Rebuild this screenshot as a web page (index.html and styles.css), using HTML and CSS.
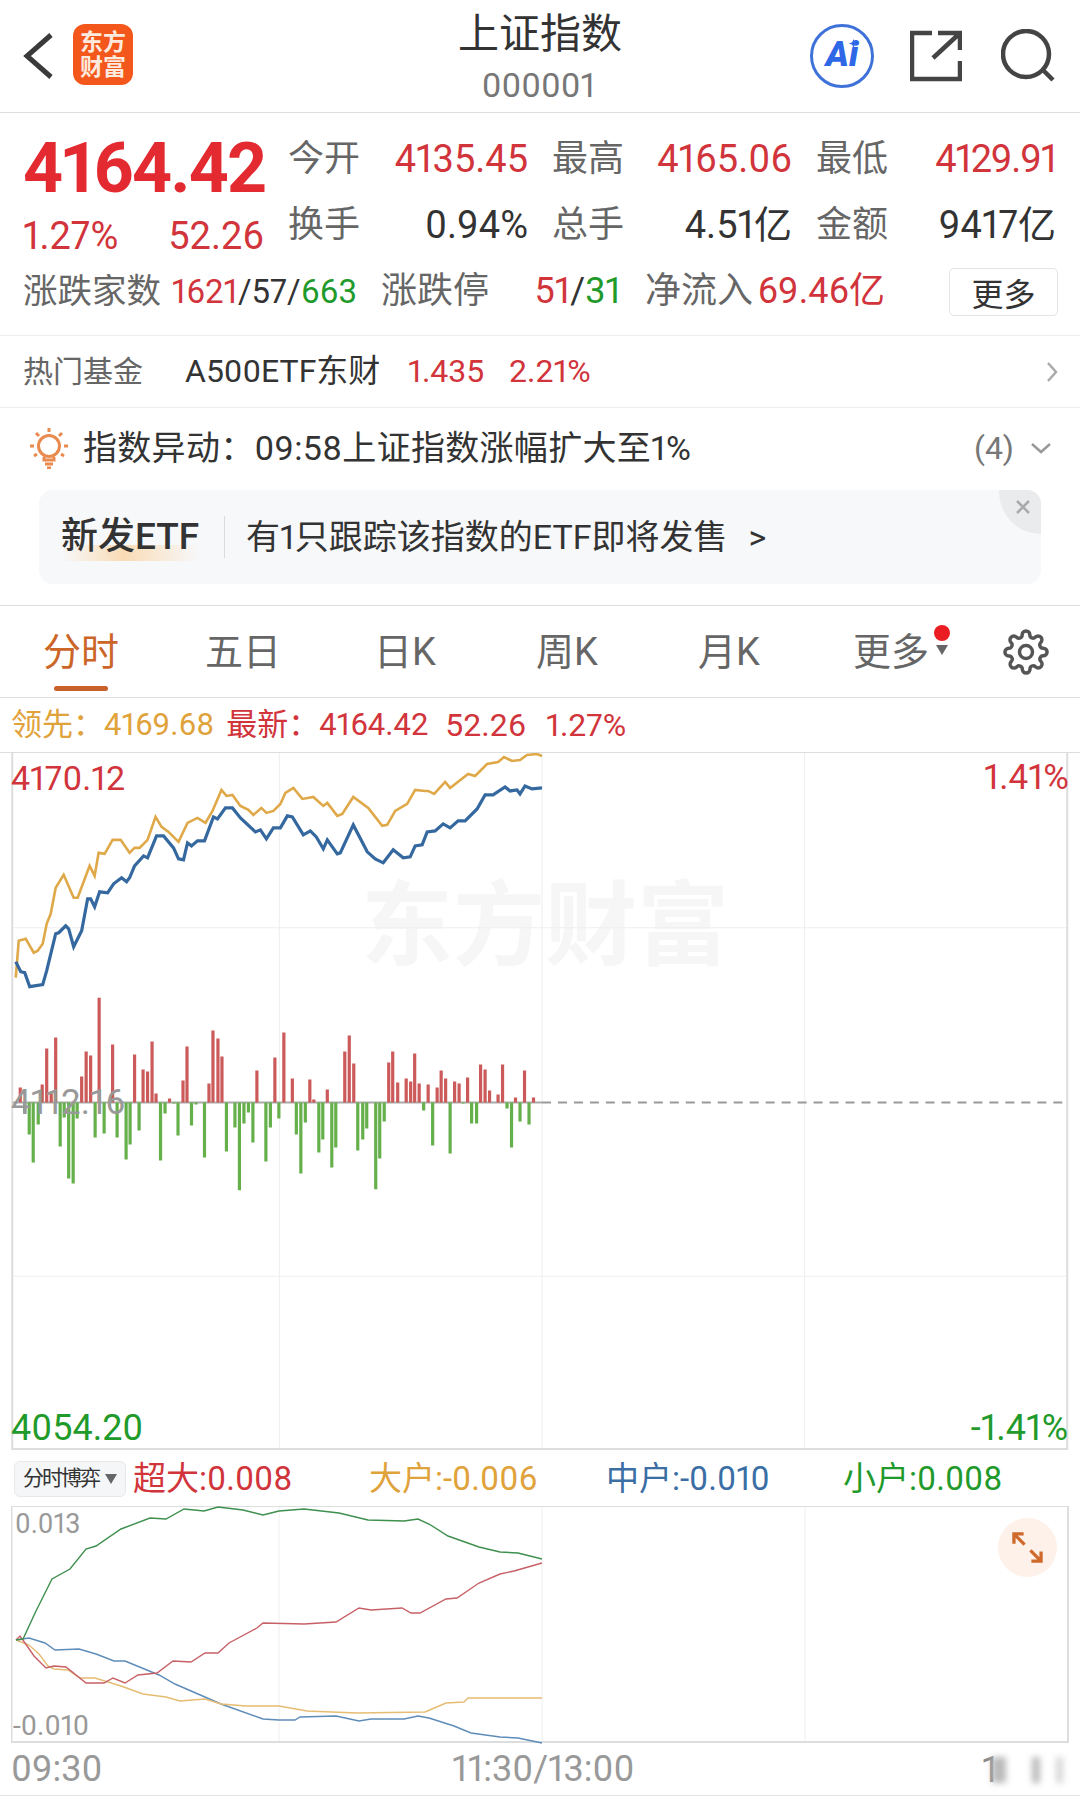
FILE: index.html
```html
<!DOCTYPE html>
<html lang="zh-CN">
<head>
  <meta charset="UTF-8">
  <meta name="viewport" content="width=device-width, initial-scale=1.0">
  <title>上证指数</title>
  <link rel="stylesheet" href="styles.css">
</head>
<body>
  <header class="top-bar">
    <svg class="back-icon" viewBox="0 0 32 48"><polyline points="28,3 4,24 28,45"/></svg>
    <div class="logo">东方<br>财富</div>
    <div class="title-box">
      <h1>上证指数</h1>
      <p>000001</p>
    </div>
    <div class="top-actions">
      <div class="ai-badge">
        <span>Ai</span>
        <svg class="ai-spark" viewBox="0 0 10 10"><path d="M5 0 6.4 3.6 10 5 6.4 6.4 5 10 3.6 6.4 0 5 3.6 3.6z"/></svg>
      </div>
      <svg class="share-icon" viewBox="0 0 52 52"><path d="M22 3H2V49H50V31M28 3H50V20M23 28 49 4"/></svg>
      <svg class="search-icon" viewBox="0 0 54 54"><circle cx="25" cy="25" r="23"/><path d="M42 41 52 51"/></svg>
    </div>
  </header>

  <!-- Quote block -->
  <section class="quote">
    <div class="quote-top">
      <div class="price-box">
        <div class="price">4164.42</div>
        <div class="price-sub"><span>1.27%</span><span>52.26</span></div>
      </div>
      <div class="stats">
        <div class="stat"><label>今开</label><span class="up">4135.45</span></div>
        <div class="stat"><label>最高</label><span class="up">4165.06</span></div>
        <div class="stat"><label>最低</label><span class="up tight">4129.91</span></div>
        <div class="stat"><label>换手</label><span>0.94%</span></div>
        <div class="stat"><label>总手</label><span>4.51亿</span></div>
        <div class="stat"><label>金额</label><span>9417亿</span></div>
      </div>
    </div>
    <div class="quote-bottom">
      <div class="stat stat-wide"><label>涨跌家数</label><span><b class="up">1621</b>/57/<b class="down">663</b></span></div>
      <div class="stat"><label>涨跌停</label><span><b class="up">51</b>/<b class="down">31</b></span></div>
      <div class="stat"><label>净流入</label><span class="up">69.46亿</span></div>
      <button class="more-btn">更多</button>
    </div>
  </section>

  <section class="fund-row">
    <span class="fund-label">热门基金</span>
    <span class="fund-name">A500ETF东财</span>
    <span class="up fund-price">1.435</span>
    <span class="up fund-pct">2.21%</span>
    <svg class="fund-arrow" viewBox="0 0 12 22"><polyline points="2,2 10,11 2,20"/></svg>
  </section>

  <section class="alert">
    <div class="alert-row">
      <svg class="bulb-icon" viewBox="0 0 40 42">
        <circle cx="20" cy="19" r="10.5"/>
        <path d="M20 1V5M7 6 10 9M33 6 30 9M1 19H5M35 19H39M5 29 8 27M35 29 32 27" class="bulb-rays"/>
        <path d="M15 30V33H25V30M16 37H24M18 41H22"/>
      </svg>
      <span class="alert-text">指数异动：09:58上证指数涨幅扩大至1%</span>
      <span class="alert-count">(4)</span>
      <svg class="alert-arrow" viewBox="0 0 22 12"><polyline points="2,2 11,10 20,2"/></svg>
    </div>
    <div class="etf-banner">
      <span class="etf-tag"><span>新发ETF</span></span>
      <i class="etf-divider"></i>
      <span class="etf-text">有1只跟踪该指数的ETF即将发售</span>
      <span class="etf-go">&gt;</span>
      <div class="etf-close">
        <svg viewBox="0 0 14 14"><path d="M1 1 13 13M13 1 1 13"/></svg>
      </div>
    </div>
  </section>

  <nav class="tabs">
    <div class="tab active">分时</div>
    <div class="tab">五日</div>
    <div class="tab">日K</div>
    <div class="tab">周K</div>
    <div class="tab">月K</div>
    <div class="tab tab-more">更多<i class="red-dot"></i><i class="tri"></i></div>
    <svg class="gear-icon" viewBox="0 0 24 24">
      <circle cx="12" cy="12" r="3.4"/>
      <path d="M19.4 15a1.65 1.65 0 0 0 .33 1.82l.06.06a2 2 0 0 1 0 2.83 2 2 0 0 1-2.83 0l-.06-.06a1.65 1.65 0 0 0-1.82-.33 1.65 1.65 0 0 0-1 1.51V21a2 2 0 0 1-2 2 2 2 0 0 1-2-2v-.09A1.65 1.65 0 0 0 9 19.4a1.65 1.65 0 0 0-1.82.33l-.06.06a2 2 0 0 1-2.83 0 2 2 0 0 1 0-2.83l.06-.06a1.65 1.65 0 0 0 .33-1.82 1.65 1.65 0 0 0-1.51-1H3a2 2 0 0 1-2-2 2 2 0 0 1 2-2h.09A1.65 1.65 0 0 0 4.6 9a1.65 1.65 0 0 0-.33-1.82l-.06-.06a2 2 0 0 1 0-2.83 2 2 0 0 1 2.83 0l.06.06a1.65 1.65 0 0 0 1.82.33H9a1.65 1.65 0 0 0 1-1.51V3a2 2 0 0 1 2-2 2 2 0 0 1 2 2v.09a1.65 1.65 0 0 0 1 1.51 1.65 1.65 0 0 0 1.82-.33l.06-.06a2 2 0 0 1 2.83 0 2 2 0 0 1 0 2.83l-.06.06a1.65 1.65 0 0 0-.33 1.82V9a1.65 1.65 0 0 0 1.51 1H21a2 2 0 0 1 2 2 2 2 0 0 1-2 2h-.09a1.65 1.65 0 0 0-1.51 1z"/>
    </svg>
  </nav>

  <section class="legend">
    <span class="lead">领先：</span><span class="lead lead-val">4169.68</span>
    <span class="up last-label">最新：</span><span class="up last-val">4164.42</span>
    <span class="up last-chg">52.26</span>
    <span class="up last-pct">1.27%</span>
  </section>

  <!-- Price chart. viewBox uses page coordinates -->
  <section class="chart">
    <svg class="chart-svg" viewBox="11 752 1058 699">
      <path class="grid" d="M11 927H1069M11 1276H1069M279 752V1450M542 752V1450M805 752V1450"/>
      <path class="frame" d="M11.5 752V1449H1068V752"/>
      <path class="base" d="M12 1102H542"/>
      <path class="dash" d="M542 1102H1069"/>
      <path class="vol-up" d="M19.5 1102V1087M41.5 1102V1084M46 1102V1048M50.5 1102V1093M55 1102V1037M81 1102V1076M85.5 1102V1051M90 1102V1055M98.5 1102V997M112 1102V1044M134 1102V1054M142.5 1102V1069M147 1102V1071M151.5 1102V1041M155.5 1102V1093M169 1102V1098M182.5 1102V1080M186.5 1102V1046M208.5 1102V1083M212.5 1102V1030M217.5 1102V1038M221.5 1102V1056M256.5 1102V1070M274.5 1102V1057M283.5 1102V1032M292 1102V1078M309.5 1102V1079M313.5 1102V1099M327 1102V1089M344.5 1102V1051M349 1102V1035M353.5 1102V1063M388.5 1102V1062M392.5 1102V1051M397.5 1102V1082M406 1102V1078M410.5 1102V1081M414.5 1102V1053M419 1102V1083M428 1102V1084M437 1102V1087M441 1102V1070M445.5 1102V1078M454.5 1102V1081M459 1102V1083M467.5 1102V1077M480.5 1102V1064M485 1102V1069M489.5 1102V1090M498 1102V1094M502.5 1102V1064M524.5 1102V1070M515.5 1102V1097M533.5 1102V1097"/>
      <path class="vol-down" d="M24 1102V1113M28.5 1102V1134M32.5 1102V1162M37.5 1102V1124M59.5 1102V1146M63.5 1102V1117M68 1102V1178M72.5 1102V1183M76.5 1102V1118M94.5 1102V1137M103.5 1102V1133M116.5 1102V1137M125.5 1102V1159M129.5 1102V1144M138.5 1102V1130M160 1102V1160M164.5 1102V1113M173.5 1102V1103M177.5 1102V1135M191 1102V1125M195.5 1102V1104M204 1102V1157M226 1102V1151M234.5 1102V1127M239 1102V1190M243.5 1102V1123M248 1102V1112M252.5 1102V1142M265.5 1102V1161M270 1102V1127M278.5 1102V1118M296 1102V1134M300.5 1102V1173M305 1102V1122M318.5 1102V1152M322.5 1102V1139M331.5 1102V1167M335.5 1102V1147M357.5 1102V1150M362.5 1102V1139M366.5 1102V1128M375.5 1102V1189M379.5 1102V1158M384 1102V1121M423.5 1102V1110M432.5 1102V1145M450 1102V1153M463 1102V1103M471.5 1102V1123M476.5 1102V1123M507 1102V1108M511.5 1102V1147M520 1102V1121M529 1102V1124"/>
      <polyline class="line-lead" points="15,977 18,940 25,938 33,952 37,950 42,943 46,923 50,913 55,887 63,874 73,897 77,897 89,865 94,875 98,852 104,853 112,839 120,839 129,852 134,847 139,847 147,839 155,816 161,826 168,831 178,841 187,822 197,817 205,822 212,810 221,789 226,795 232,794 240,805 248,809 253,814 261,807 266,812 273,810 280,803 285,792 293,787 302,798 313,796 323,805 327,802 337,815 342,813 353,796 368,807 382,825 387,824 395,810 407,803 415,789 425,790 428,790 434,793 445,781 450,787 468,773 475,775 487,763 498,761 504,756 512,760 520,759 527,754 537,753 542,755"/>
      <polyline class="line-last" points="15,961 20,971 24,972 29,986 42,984 46,970 55,933 58,932 65,925 68,928 73,946 81,930 87,898 90,898 94,906 99,891 107,892 113,883 121,877 126,881 129,877 134,865 143,855 147,857 156,835 163,835 173,847 178,858 183,859 187,842 191,845 197,840 204,840 213,816 217,818 225,807 232,807 240,817 255,831 260,829 266,838 273,827 280,827 287,815 292,816 303,834 310,830 316,836 323,848 327,839 337,853 340,852 353,824 367,851 375,858 383,862 393,849 403,857 410,856 415,845 422,844 427,831 435,830 443,823 450,827 458,820 465,820 477,808 485,794 493,794 505,786 510,790 517,789 520,793 525,785 532,788 542,787"/>
    </svg>
    <div class="watermark">东方财富</div>
    <span class="ax ax-tl up">4170.12</span>
    <span class="ax ax-tr up">1.41%</span>
    <span class="ax ax-mid">4112.16</span>
    <span class="ax ax-bl down">4054.20</span>
    <span class="ax ax-br down">-1.41%</span>
  </section>

  <section class="game-row">
    <div class="game-select"><span>分时博弈</span><i class="tri"></i></div>
    <span class="up game-a">超大:0.008</span>
    <span class="lead game-b">大户:-0.006</span>
    <span class="blue game-c">中户:-0.010</span>
    <span class="down game-d">小户:0.008</span>
  </section>

  <section class="chart chart-small">
    <svg class="chart-svg" viewBox="11 1505 1058 238">
      <path class="grid" d="M279 1505V1742M542 1505V1742M805 1505V1742"/>
      <path class="frame" d="M11.5 1505V1741H1068V1505H12"/>
      <polyline class="thin t-blue" points="16,1639 29,1637 45,1642 55,1649 79,1648 96,1653 114,1660 125,1660 159,1674 175,1683 221,1703 263,1718 279,1719 295,1719 300,1716 336,1715 359,1720 371,1718 404,1718 418,1715 429,1717 454,1725 471,1732 500,1736 518,1737 542,1742"/>
      <polyline class="thin t-yellow" points="16,1639 29,1644 39,1653 48,1665 54,1668 68,1669 80,1677 95,1677 121,1685 143,1693 166,1696 180,1700 205,1698 221,1703 246,1705 279,1705 307,1710 357,1712 425,1711 446,1702 464,1701 468,1697 500,1697 542,1697"/>
      <polyline class="thin t-red" points="16,1639 20,1635 25,1642 34,1655 46,1667 54,1665 66,1666 86,1682 104,1682 113,1677 125,1682 138,1674 157,1672 173,1660 191,1661 205,1652 218,1652 229,1642 257,1627 263,1622 304,1623 336,1621 359,1607 371,1609 402,1607 411,1612 420,1612 446,1598 457,1597 479,1582 500,1573 514,1570 542,1562"/>
      <polyline class="thin t-green" points="16,1639 23,1638 36,1610 52,1578 70,1568 86,1548 96,1545 121,1528 150,1517 166,1518 184,1508 204,1510 218,1506 243,1509 263,1514 279,1510 304,1508 339,1512 368,1519 404,1520 418,1518 429,1523 448,1535 479,1546 500,1551 518,1552 542,1558"/>
    </svg>
    <span class="ax ax-small-t">0.013</span>
    <span class="ax ax-small-b">-0.010</span>
    <div class="expand-btn">
      <svg viewBox="0 0 32 32"><path d="M2 2 13 13M2 12V2H12M30 30 19 19M30 20V30H20"/></svg>
    </div>
  </section>

  <footer class="time-axis">
    <span>09:30</span>
    <span class="time-mid">11:30/13:00</span>
    <div class="time-end"><span>1</span><i class="blur-a"></i><i class="blur-b"></i><i class="blur-c"></i></div>
  </footer>
</body>
</html>
```

FILE: styles.css
```css
* { box-sizing: border-box; }
body {
  margin: 0;
  width: 1080px;
  background: #fff;
  font-family: Roboto, "Noto Sans CJK SC", sans-serif;
  font-variant-numeric: proportional-nums;
  line-height: 1.2;
  color: #333;
}
b, i { font-weight: inherit; font-style: normal; }
.up { color: #d1343b; }
.down { color: #1f9a2b; }
.lead { color: #e0a23a; }
.blue { color: #3a6ea5; }

/* Top bar */
.top-bar {
  position: relative;
  display: flex;
  align-items: center;
  height: 113px;
  padding-left: 23px;
  border-bottom: 1px solid #ddd;
}
.back-icon { width: 32px; height: 48px; fill: none; stroke: #3a3a3a; stroke-width: 5; }
.logo {
  width: 60px;
  height: 61px;
  margin: -3px 0 0 18px;
  padding-top: 6px;
  background: #f4571b;
  border-radius: 12px;
  color: #fdeadf;
  font-size: 23px;
  line-height: 25px;
  font-weight: 700;
  text-align: center;
}
.title-box {
  position: absolute;
  left: 0;
  right: 0;
  top: 8px;
  text-align: center;
}
.title-box h1 { margin: 0; font-size: 41px; line-height: 52px; font-weight: 400; color: #333; }
.title-box p { margin: 6px 3px 0 0; font-size: 34px; line-height: 38px; color: #777; }
.top-actions {
  display: flex;
  align-items: center;
  margin-left: auto;
  padding-right: 25px;
}
.ai-badge {
  position: relative;
  width: 64px;
  height: 64px;
  border: 3.5px solid #3f72d8;
  border-radius: 50%;
  color: #2e68e6;
  font-size: 35px;
  line-height: 56px;
  font-weight: 900;
  font-style: italic;
  text-align: center;
}
.ai-spark { position: absolute; right: 13px; top: 12px; width: 9px; height: 9px; fill: #2e68e6; }
.share-icon { width: 52px; height: 52px; margin-left: 36px; fill: none; stroke: #444; stroke-width: 4.5; }
.search-icon { width: 54px; height: 54px; margin-left: 39px; fill: none; stroke: #444; stroke-width: 4.5; }

/* Quote */
.quote {
  height: 223px;
  padding: 12px 22px 0 23px;
  border-bottom: 1px solid #eee;
  white-space: nowrap;
}
.quote-top { display: flex; }
.price-box { width: 241px; height: 134px; }
.price {
  height: 75px;
  margin-top: 6px;
  font-size: 70px;
  line-height: 75px;
  font-weight: 700;
  letter-spacing: -1.9px;
  color: #e32a30;
}
.price-sub {
  display: flex;
  justify-content: space-between;
  margin-top: 5px;
  font-size: 38px;
  line-height: 50px;
  color: #d1343b;
}
.stats {
  display: grid;
  grid-template-columns: repeat(3, 240px);
  grid-auto-rows: 66px;
  column-gap: 24px;
  margin: 2px 0 0 24px;
}
.stat {
  display: flex;
  justify-content: space-between;
  align-items: center;
  font-size: 38px;
}
.stat label { color: #666; font-size: 36px; }
.tight { letter-spacing: -1.2px; }
.quote-bottom {
  display: flex;
  align-items: center;
  height: 66px;
  gap: 24px;
}
.quote-bottom .stat { width: 240px; font-size: 36px; }
.quote-bottom .stat-wide { width: 334px; font-size: 33px; }
.quote-bottom .stat-wide label { font-size: 34.5px; }
.more-btn {
  width: 109px;
  height: 48px;
  margin-left: 40px;
  padding: 0;
  background: #fff;
  border: 1px solid #e4e4e4;
  border-radius: 5px;
  font: 32px Roboto, "Noto Sans CJK SC", sans-serif;
  color: #333;
}

/* Fund row */
.fund-row {
  display: flex;
  align-items: center;
  height: 72px;
  padding-left: 23px;
  font-size: 32px;
  border-bottom: 1px solid #eee;
}
.fund-label { width: 162px; color: #666; font-size: 30px; }
.fund-name { width: 223px; font-size: 32px; color: #333; }
.fund-price { width: 101px; }
.fund-arrow { width: 12px; height: 22px; margin-left: auto; margin-right: 22px; fill: none; stroke: #aaa; stroke-width: 2.5; }

/* Alert + banner */
.alert {
  height: 198px;
  border-bottom: 1px solid #ddd;
}
.alert-row {
  display: flex;
  align-items: center;
  height: 80px;
  padding: 0 28px 0 29px;
}
.bulb-icon { width: 40px; height: 42px; fill: none; stroke: #e98a4f; stroke-width: 3; }
.alert-text { margin-left: 14px; font-size: 34px; letter-spacing: 0.3px; color: #333; }
.alert-count { margin-left: auto; font-size: 32px; color: #777; }
.alert-arrow { width: 22px; height: 12px; margin-left: 16px; fill: none; stroke: #999; stroke-width: 2.5; }
.etf-banner {
  position: relative;
  display: flex;
  align-items: center;
  width: 1002px;
  height: 94px;
  margin: 2px 0 0 39px;
  padding-left: 22px;
  background: #f7f8fa;
  border-radius: 14px;
  overflow: hidden;
}
.etf-tag {
  position: relative;
  width: 141px;
  font-size: 37px;
  font-weight: 500;
  color: #333;
  white-space: nowrap;
}
.etf-tag span { position: relative; }
.etf-tag::before {
  content: "";
  position: absolute;
  left: 0;
  right: 2px;
  bottom: -2px;
  height: 16px;
  background: linear-gradient(to right, #f7f8fa, #f9dcb6 45%, #f7f8fa);
}
.etf-divider { width: 1px; height: 42px; margin-left: 22px; background: #dcdcdc; }
.etf-text { margin-left: 21px; font-size: 34px; color: #333; }
.etf-go { margin-left: 21px; font-size: 34px; color: #333; }
.etf-close {
  position: absolute;
  right: 0;
  top: 0;
  width: 42px;
  height: 44px;
  background: #e9ebed;
  border-bottom-left-radius: 42px;
}
.etf-close svg {
  position: absolute;
  left: 17px;
  top: 10px;
  width: 14px;
  height: 14px;
  fill: none;
  stroke: #aaa;
  stroke-width: 2.5;
}

/* Tabs */
.tabs {
  display: grid;
  grid-template-columns: repeat(6, 162px) 108px;
  align-items: center;
  height: 92px;
  border-bottom: 1px solid #ddd;
}
.tab {
  position: relative;
  text-align: center;
  font-size: 38px;
  line-height: 92px;
  color: #666;
}
.tab.active { color: #cb6528; }
.tab.active::after {
  content: "";
  position: absolute;
  left: 54px;
  bottom: 7px;
  width: 54px;
  height: 5px;
  border-radius: 3px;
  background: #c9622a;
}
.red-dot {
  position: absolute;
  left: 124px;
  top: 19px;
  width: 16px;
  height: 16px;
  border-radius: 50%;
  background: #ea1e22;
}
.tab-more .tri { position: absolute; left: 126px; top: 39px; }
.tri {
  display: block;
  width: 0;
  height: 0;
  border-left: 6px solid transparent;
  border-right: 6px solid transparent;
  border-top: 10px solid #666;
}
.gear-icon { width: 46px; height: 46px; margin-left: 31px; fill: none; stroke: #555; stroke-width: 1.8; }

/* Legend */
.legend {
  display: flex;
  align-items: center;
  height: 54px;
  padding-left: 11px;
  font-size: 31px;
}
.last-label { margin-left: 12px; }
.last-chg { margin-left: 17px; font-size: 32px; }
.last-pct { margin-left: 20px; font-size: 32px; }

/* Charts */
.chart {
  position: relative;
  height: 699px;
  border-top: 1px solid #ddd;
}
.chart-svg { display: block; width: 1058px; height: 698px; margin-left: 11px; }
.grid { fill: none; stroke: #eee; stroke-width: 1; }
.frame { fill: none; stroke: #ddd; stroke-width: 2; }
.base { stroke: #aaa; stroke-width: 2; }
.dash { stroke: #999; stroke-width: 2; stroke-dasharray: 9 7; }
.vol-up { stroke: #cc5a5a; stroke-width: 3.2; }
.vol-down { stroke: #66b04c; stroke-width: 3.2; }
.line-lead { fill: none; stroke: #dfa848; stroke-width: 2.6; }
.line-last { fill: none; stroke: #34689f; stroke-width: 3.2; }
.watermark {
  position: absolute;
  left: 361px;
  top: 124px;
  font-size: 92px;
  line-height: 100px;
  font-weight: 700;
  color: #f6f6f6;
  z-index: -1;
}
.ax { position: absolute; font-size: 35px; line-height: 40px; }
.ax-tl { left: 11px; top: 5px; font-size: 34px; }
.ax-tr { right: 11px; top: 5px; }
.ax-mid { left: 11px; top: 330px; color: #999; }
.ax-bl { left: 11px; top: 655px; font-size: 36px; }
.ax-br { right: 12px; top: 655px; font-size: 36px; }

.game-row {
  display: flex;
  align-items: center;
  height: 55px;
  padding-left: 14px;
  font-size: 33px;
  white-space: nowrap;
}
.game-select {
  display: flex;
  align-items: center;
  width: 112px;
  height: 36px;
  padding-left: 8px;
  background: #f5f6f7;
  border: 1px solid #e8e8e8;
  border-radius: 6px;
  font-size: 21px;
  letter-spacing: -2px;
  color: #333;
}
.game-select .tri { margin-left: 6px; }
.game-a { margin-left: 7px; width: 236px; }
.game-b { width: 237px; }
.game-c { width: 237px; }

.chart-small { height: 238px; border-top: 0; }
.chart-small .chart-svg { height: 238px; }
.thin { fill: none; stroke-width: 1.4; }
.t-blue { stroke: #5d8cb8; }
.t-yellow { stroke: #e6bc72; }
.t-red { stroke: #c76066; }
.t-green { stroke: #3f8f4f; }
.chart-small .ax-small-t { left: 15px; top: -2px; font-size: 27px; color: #999; }
.chart-small .ax-small-b { left: 13px; top: 200px; font-size: 28px; color: #999; }
.expand-btn {
  position: absolute;
  left: 998px;
  top: 12px;
  width: 59px;
  height: 59px;
  padding: 14px;
  border-radius: 50%;
  background: #fdf1ea;
}
.expand-btn svg { display: block; width: 31px; height: 31px; fill: none; stroke: #cf6a2c; stroke-width: 3.4; }

.time-axis {
  position: relative;
  display: flex;
  align-items: center;
  height: 52px;
  padding-left: 11px;
  font-size: 36px;
  color: #999;
  border-bottom: 1px solid #e4e4e4;
}
.time-mid { position: absolute; left: 452px; }
.time-end {
  position: absolute;
  left: 982px;
  width: 86px;
  height: 34px;
  color: #888;
  line-height: 34px;
}
.time-end i { position: absolute; top: 4px; height: 26px; background: #bbb; filter: blur(3px); }
.blur-a { left: 10px; width: 14px; }
.blur-b { left: 50px; width: 8px; }
.blur-c { left: 74px; width: 7px; opacity: .6; }
```
